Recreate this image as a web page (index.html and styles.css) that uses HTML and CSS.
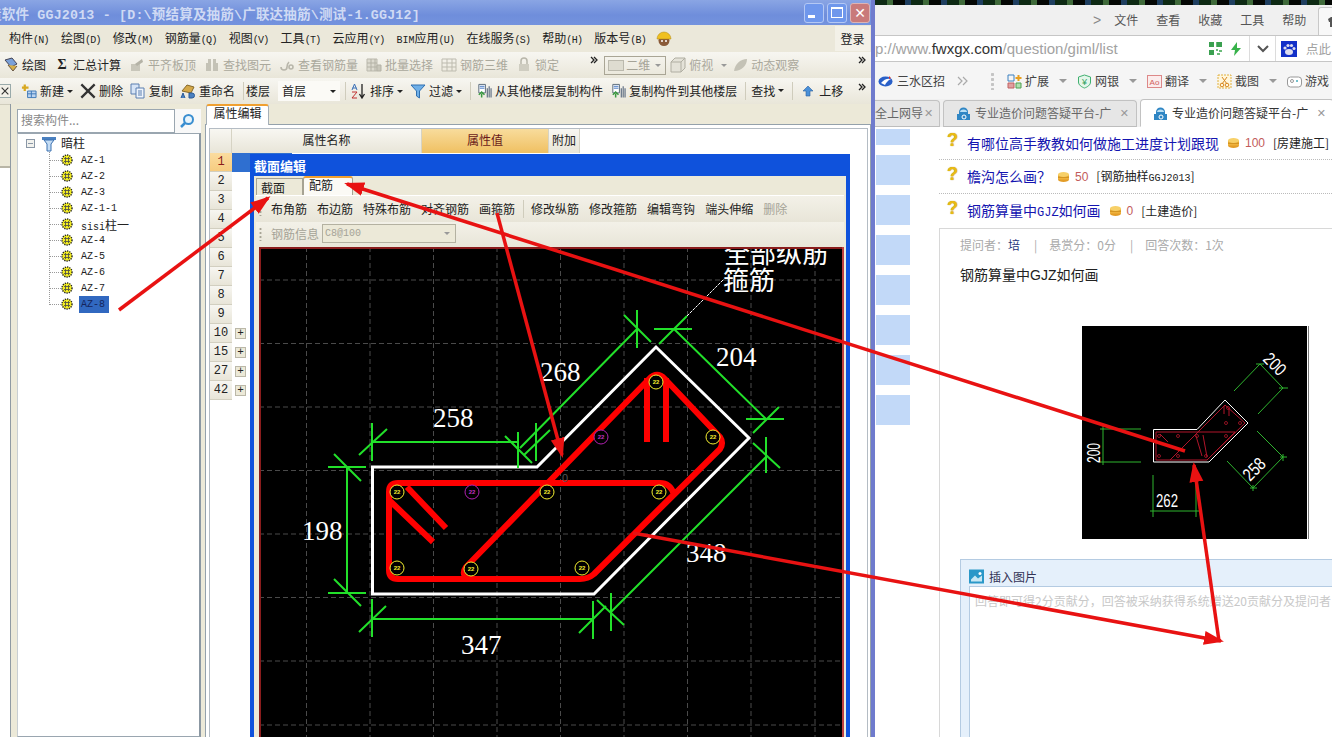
FILE: index.html
```html
<!DOCTYPE html>
<html lang="zh-CN">
<head>
<meta charset="utf-8">
<title>GGJ2013</title>
<link rel="stylesheet" href="styles.css">
</head>
<body>
<svg class="defs" aria-hidden="true">
  <symbol id="gear" viewBox="0 0 12 12"><circle cx="6" cy="6" r="5" fill="#f4ee20" stroke="#222" stroke-width="1.4" stroke-dasharray="1.3 1"/><path d="M3 4.5h6M3 7.5h6M4.5 3v6M7.5 3v6" stroke="#554" stroke-width=".9"/></symbol>
  <symbol id="dbl" viewBox="0 0 8 8"><path d="M1 1l3 3-3 3M4 1l3 3-3 3" fill="none" stroke="#222" stroke-width="1.3"/></symbol>
  <symbol id="draw" viewBox="0 0 16 16"><path d="M2 3l6 7 6-3-5-6z" fill="#7aa0d8" stroke="#445"/><path d="M5 8l5 6 4-5" fill="#d8b048" stroke="#654"/></symbol>
  <symbol id="gray" viewBox="0 0 16 16"><path d="M2 7h9v7H2z" fill="#c8c6ba"/><path d="M6 7l7-5 1 3-6 4z" fill="#b4b2a6"/></symbol>
  <symbol id="bino" viewBox="0 0 16 16"><path d="M2 6h5v8H2zM9 6h5v8H9zM4 2h3v4H4zM9 2h3v4H9z" fill="#c4c2b6"/></symbol>
  <symbol id="look" viewBox="0 0 16 16"><path d="M2 10a3 3 0 006 0c0-3 1-4 2-5M10 10a2 2 0 104 0 2 2 0 00-4 0" fill="none" stroke="#b8b6aa" stroke-width="1.6"/></symbol>
  <symbol id="batch" viewBox="0 0 16 16"><path d="M1 2h10v12H1z" fill="#dcdacf" stroke="#bbb9ad"/><path d="M1 6h10M1 10h10M5 2v12M9 2v12M11 8h4v6h-4z" fill="#c8c6ba" stroke="#b4b2a6"/></symbol>
  <symbol id="bars" viewBox="0 0 16 16"><path d="M1 2h14v12H1zM1 6h14M1 10h14M6 2v12M11 2v12" fill="none" stroke="#bdbbaf"/></symbol>
  <symbol id="lock" viewBox="0 0 16 16"><path d="M5 7V4a3 3 0 016 0v3" fill="none" stroke="#b8b6aa" stroke-width="1.5"/><path d="M3 7h10v7H3z" fill="#cfcdc1"/></symbol>
  <symbol id="cube" viewBox="0 0 16 16"><path d="M1 5l4-4h10v10l-4 4H1zM1 5h10v10M11 5l4-4" fill="#e4e2d8" stroke="#b0aea2"/></symbol>
  <symbol id="orbit" viewBox="0 0 16 16"><path d="M2 14C3 7 8 2 15 2c0 6-5 12-13 12z" fill="#c4c2b6"/></symbol>
  <symbol id="new" viewBox="0 0 17 16"><path d="M7 8h9v7H7z" fill="#bcd4f0" stroke="#3c78b8"/><path d="M7 11h9M11 8v7" stroke="#3c78b8"/><path d="M4 1v7M1 4.500h7" stroke="#d8a820" stroke-width="2.400"/></symbol>
  <symbol id="x" viewBox="0 0 12 12"><path d="M1 1l10 10M11 1L1 11" stroke="#333" stroke-width="1.700"/></symbol>
  <symbol id="copy" viewBox="0 0 16 16"><path d="M1 1h8v10H1z" fill="#d6e4f6" stroke="#5a7fb0"/><path d="M6 5h8v10H6z" fill="#eef4fc" stroke="#5a7fb0"/><path d="M8 8h4M8 10h4M8 12h4" stroke="#5a7fb0"/></symbol>
  <symbol id="rename" viewBox="0 0 16 16"><path d="M2 8l5-6 7 2-3 6z" fill="#d4a848" stroke="#85682a"/><path d="M1 15l2-5 2 5M9 15V10h3a2 2 0 010 5z" fill="#4a80c0" stroke="#2a5a98"/></symbol>
  <symbol id="sort" viewBox="0 0 16 16"><path d="M1 7l2.500-6L6 7M1.500 5h4" fill="none" stroke="#3a70b8"/><path d="M1 9h5l-5 6h5" fill="none" stroke="#c03030"/><path d="M11 1v13M8.500 11l2.500 4 2.500-4" fill="none" stroke="#222" stroke-width="1.300"/></symbol>
  <symbol id="filter" viewBox="0 0 16 16"><path d="M1 2h14L9.500 8v7L6.500 13V8z" fill="#70b0e8" stroke="#3070b0"/></symbol>
  <symbol id="fromlv" viewBox="0 0 17 16"><path d="M3 1h7v9H3z" fill="#fff" stroke="#567"/><path d="M4 3h5M4 5h5" stroke="#3a70c0"/><path d="M6 15v-4M3 12l3-3 3 3" fill="none" stroke="#3a9a40" stroke-width="1.600"/><path d="M12 5v10M14 3v12M16 5v10" stroke="#5a6a80" stroke-width="1.200"/></symbol>
  <symbol id="up" viewBox="0 0 16 16"><path d="M8 3l5 5h-3v5H6V8H3z" fill="#4a90d8" stroke="#2a60a0" stroke-width=".6"/></symbol>
  <symbol id="coin" viewBox="0 0 11 10"><ellipse cx="5.500" cy="7.500" rx="5.500" ry="2.500" fill="#e39d28"/><rect y="2.500" width="11" height="5" fill="#efb23c"/><path d="M0 5.200h11" stroke="#c98818"/><ellipse cx="5.500" cy="2.500" rx="5.500" ry="2.500" fill="#f7d068"/></symbol>
  <symbol id="tabicon" viewBox="0 0 15 15"><path d="M3 6a4.500 4.500 0 019 0v2H3z" fill="#2f86c4"/><path d="M1 8h13v6H1z" fill="#2f86c4" rx="2"/><path d="M4 6a3.500 2.500 0 017 0" fill="#b8def4"/><circle cx="8" cy="11" r="2" fill="none" stroke="#fff"/></symbol>
</svg>

<main class="desktop">

  <section class="browser">
    <div class="b-wall"></div>
    <div class="b-menu">
      <span class="b-chev">&gt;</span><span>文件</span><span>查看</span><span>收藏</span><span>工具</span><span>帮助</span>
      <div class="b-skin"><svg class="ic12" viewBox="0 0 12 12"><path d="M1 3l3-2h4l3 2-1 3H9v5H3V6H2z" fill="#555"/></svg></div>
    </div>
    <div class="b-addr">
      <div class="b-url">p://www.<b>fwxgx.com</b>/question/giml/list</div>
      <svg class="ic13" viewBox="0 0 13 13"><path d="M0 0h5v5H0zM8 0h5v5H8zM0 8h5v5H0zM2 2h1v1H2zM10 2h1v1h-1z" fill="#3aa050"/><path d="M7 7h2v2H7zM10 8h3v2h-3zM8 11h3v2H8zM7 0h1v5H7z" fill="#6bbb7a"/></svg>
      <svg class="ic-bolt" viewBox="0 0 12 14"><path d="M7 0L1 8h4l-1 6 7-8H7z" fill="#37b24a"/></svg>
      <i class="b-sep"></i>
      <svg class="ic-chev" viewBox="0 0 12 8"><path d="M1 1l5 5 5-5" fill="none" stroke="#555" stroke-width="2"/></svg>
      <i class="b-sep"></i>
      <svg class="ic-paw" viewBox="0 0 16 16"><rect width="16" height="16" fill="#1230c8"/><ellipse cx="8" cy="11" rx="4" ry="3" fill="#dde"/><circle cx="4" cy="7" r="1.600" fill="#dde"/><circle cx="7" cy="4.500" r="1.600" fill="#dde"/><circle cx="10.500" cy="4.500" r="1.600" fill="#dde"/><circle cx="13" cy="7.500" r="1.500" fill="#dde"/></svg>
      <span class="b-search">点此</span>
    </div>
    <div class="b-fav">
      <span class="fav"><svg class="ic15" viewBox="0 0 15 15"><ellipse cx="7.500" cy="7.500" rx="7" ry="5" fill="#2a60c8"/><path d="M3 9c3-4 7-5 10-4-3 1-5 4-6 6" fill="#fff"/><path d="M11 2l2 2-2 1z" fill="#d83030"/></svg>三水区招</span>
      <svg class="ic-dbl" viewBox="0 0 12 10"><path d="M1 1l4 4-4 4M6 1l4 4-4 4" fill="none" stroke="#aaa" stroke-width="1.200"/></svg>
      <i class="b-grip"></i>
      <span class="fav"><svg class="ic15" viewBox="0 0 15 15"><path d="M1 1h6v6H1z" fill="none" stroke="#3a80c0"/><path d="M1 9h6v5H1z" fill="#e0a0a0" stroke="#c06060"/><path d="M9 9h5v5H9z" fill="#b0e0b0" stroke="#50a050"/><path d="M11.500 1v6M8.500 4h6" stroke="#e8a020" stroke-width="2"/></svg>扩展<i class="tri"></i></span>
      <span class="fav"><svg class="ic15" viewBox="0 0 15 15"><path d="M7.500 1l6 2v5c0 3-3 5-6 6-3-1-6-3-6-6V3z" fill="#e4f6ea" stroke="#40b070"/><text class="yen" x="7.500" y="11">¥</text></svg>网银<i class="tri"></i></span>
      <span class="fav"><svg class="ic15" viewBox="0 0 15 15"><rect x=".5" y="1.500" width="14" height="12" fill="#fbecec" stroke="#d88"/><text class="ao" x="7.500" y="10.500">Ao</text></svg>翻译<i class="tri"></i></span>
      <span class="fav"><svg class="ic15" viewBox="0 0 15 15"><rect x="1" y="1" width="13" height="13" fill="#fff6dc" stroke="#e0b040" stroke-dasharray="2 1"/><path d="M5 3l5 7M10 3l-5 7" stroke="#d88820"/><circle cx="5" cy="11" r="1.800" fill="none" stroke="#d88820"/><circle cx="10" cy="11" r="1.800" fill="none" stroke="#d88820"/></svg>截图<i class="tri"></i></span>
      <span class="fav"><svg class="ic15" viewBox="0 0 15 15"><rect x=".5" y="3" width="14" height="10" rx="3" fill="#fff" stroke="#999"/><circle cx="5" cy="7" r="1.500" fill="none" stroke="#999"/><circle cx="10" cy="7" r="1" fill="#4ab"/></svg>游戏</span>
    </div>
    <div class="b-tabs">
      <div class="tab tab-a"><span class="tab-t">全上网导</span><span class="tab-x">✕</span></div>
      <div class="tab tab-b"><svg class="ic15" aria-hidden="true"><use href="#tabicon"/></svg><span class="tab-t">专业造价问题答疑平台-广</span><span class="tab-x">✕</span></div>
      <div class="tab tab-c"><svg class="ic15" aria-hidden="true"><use href="#tabicon"/></svg><span class="tab-t">专业造价问题答疑平台-广</span><span class="tab-x">✕</span></div>
    </div>
    <div class="b-page">
      <div class="stripes"><i class="st-first"></i><i></i><i></i><i></i><i></i><i></i><i></i><i></i></div>
      <div class="qa">
        <div class="q-row q-dot"><span class="qm">?</span><a class="q-t">有哪位高手教教如何做施工进度计划跟现</a><svg class="coin"><use href="#coin"/></svg><span class="pts">100</span><span class="cat">[房建施工]</span></div>
        <div class="q-row q-dot"><span class="qm">?</span><a class="q-t q-t2">檐沟怎么画？</a><svg class="coin"><use href="#coin"/></svg><span class="pts">50</span><span class="cat">[钢筋抽样<span class="lat">GGJ2013</span>]</span></div>
        <div class="q-row"><span class="qm">?</span><a class="q-t">钢筋算量中<span class="lat-b">GJZ</span>如何画</a><svg class="coin"><use href="#coin"/></svg><span class="pts">0</span><span class="cat">[土建造价]</span></div>
        <div class="detail">
          <div class="meta">提问者：<b>培</b><i>|</i>悬赏分：0分<i>|</i>回答次数：1次</div>
          <div class="q-body">钢筋算量中GJZ如何画</div>
          <svg class="q-img" viewBox="1082 326 225 213">
            <rect x="1082" y="326" width="225" height="213" fill="#000"/>
            <path class="i-white" d="M1153.500 429.500H1197L1225 400 1248 423 1209 462H1153.500Z"/>
            <path class="i-red" d="M1156 432H1235L1207 460H1156ZM1170 460L1225 405 1245 423 1207 460M1160 434l8 8M1224 406v8M1229 408v8M1203 435l4 22M1196 436l6 20"/>
            <g class="i-bars"><circle cx="1159" cy="456" r="1.500"/><circle cx="1159" cy="436" r="1.500"/><circle cx="1178" cy="436" r="1.500"/><circle cx="1197" cy="436" r="1.500"/><circle cx="1226" cy="423" r="1.500"/><circle cx="1228" cy="408" r="1.500"/><circle cx="1240" cy="423" r="1.500"/><circle cx="1226" cy="436" r="1.500"/><circle cx="1178" cy="456" r="1.500"/><circle cx="1206" cy="456" r="1.500"/></g>
            <path class="i-green" d="M1153 475V517M1196 470V517M1150 511H1199M1100 429H1141M1100 462H1141M1103 426V465M1260 364L1234 391M1260 364L1283 388M1283 388L1258 414M1257 431L1283 457M1283 457L1253 488M1227 461L1253 488M1256 364H1264M1279 388H1288M1280 457H1287M1283 454V461M1250 488H1257M1253 485V491"/>
            <text class="i-txt" x="1156" y="507" textLength="22" lengthAdjust="spacingAndGlyphs">262</text>
            <text class="i-txt" transform="rotate(-90 1100 463)" x="1100" y="463" textLength="20" lengthAdjust="spacingAndGlyphs">200</text>
            <text class="i-txt" transform="rotate(45 1262 360)" x="1262" y="360" textLength="24" lengthAdjust="spacingAndGlyphs">200</text>
            <text class="i-txt" transform="rotate(-45 1250 482)" x="1250" y="482" textLength="24" lengthAdjust="spacingAndGlyphs">258</text>
          </svg>
          <div class="editor">
            <div class="ed-head"><svg class="ic15" viewBox="0 0 15 14"><rect width="15" height="14" fill="#2a98c8"/><path d="M2 10l4-4 3 3 4-3v6H2z" fill="#c8e8f4"/><circle cx="11" cy="4" r="1.500" fill="#fff"/></svg>插入图片</div>
            <div class="ed-box">回答即可得2分贡献分，回答被采纳获得系统赠送20贡献分及提问者</div>
          </div>
        </div>
      </div>
    </div>
  </section>

  <section class="app">
    <header class="titlebar">
      <div class="title">造软件<span class="tlat"> GGJ2013 - [D:\</span>预结算及抽筋<span class="tlat">\</span>广联达抽筋<span class="tlat">\</span>测试<span class="tlat">-1.GGJ12]</span></div>
      <div class="winbtns">
        <span class="wb"><i class="wb-min"></i></span>
        <span class="wb"><i class="wb-max"></i></span>
        <span class="wb wb-close">✕</span>
      </div>
    </header>
    <nav class="menubar">
      <span>构件<span class="key">(N)</span></span><span>绘图<span class="key">(D)</span></span><span>修改<span class="key">(M)</span></span><span>钢筋量<span class="key">(Q)</span></span><span>视图<span class="key">(V)</span></span><span>工具<span class="key">(T)</span></span><span>云应用<span class="key">(Y)</span></span><span><span class="key bim">BIM</span>应用<span class="key">(U)</span></span><span>在线服务<span class="key">(S)</span></span><span>帮助<span class="key">(H)</span></span><span>版本号<span class="key">(B)</span></span>
      <svg class="face" viewBox="0 0 16 16"><circle cx="8" cy="9.500" r="5.500" fill="#8a5a38"/><path d="M1 8a7 7 0 0114 0z" fill="#f0c020" stroke="#b08810" stroke-width=".5"/><circle cx="6" cy="10" r="1" fill="#fff"/><circle cx="10" cy="10" r="1" fill="#fff"/></svg>
      <span class="login">登录</span>
    </nav>
    <div class="toolbar t1">
      <span class="ti"><svg class="ic16"><use href="#draw"/></svg>绘图</span>
      <span class="ti"><b class="sigma">Σ</b>汇总计算</span>
      <span class="ti off"><svg class="ic16"><use href="#gray"/></svg>平齐板顶</span>
      <span class="ti off"><svg class="ic16"><use href="#bino"/></svg>查找图元</span>
      <span class="ti off"><svg class="ic16"><use href="#look"/></svg>查看钢筋量</span>
      <span class="ti off"><svg class="ic16"><use href="#batch"/></svg>批量选择</span>
      <span class="ti off"><svg class="ic16"><use href="#bars"/></svg>钢筋三维</span>
      <span class="ti off"><svg class="ic16"><use href="#lock"/></svg>锁定</span>
      <svg class="more more1"><use href="#dbl"/></svg>
      <span class="combo2"><i class="c2-ic"></i>二维<i class="caret gray"></i></span>
      <span class="ti off ti-v"><svg class="ic16"><use href="#cube"/></svg>俯视<i class="caret gray"></i></span>
      <span class="ti off ti-o"><svg class="ic16"><use href="#orbit"/></svg>动态观察</span>
      <svg class="more more2"><use href="#dbl"/></svg>
    </div>
    <div class="toolbar t2">
      <span class="closebox"><svg class="ic8"><use href="#x"/></svg></span>
      <span class="ti ti-first"><svg class="ic16"><use href="#new"/></svg>新建<i class="caret"></i></span>
      <span class="ti"><svg class="ic16"><use href="#x"/></svg>删除</span>
      <span class="ti"><svg class="ic16"><use href="#copy"/></svg>复制</span>
      <span class="ti"><svg class="ic16"><use href="#rename"/></svg>重命名</span>
      <i class="sep"></i><span class="floor">楼层</span>
      <span class="combo">首层<i class="caret"></i></span>
      <i class="sep"></i>
      <span class="ti ti-s"><svg class="ic16"><use href="#sort"/></svg>排序<i class="caret"></i></span>
      <span class="ti"><svg class="ic16"><use href="#filter"/></svg>过滤<i class="caret"></i></span>
      <i class="sep"></i>
      <span class="ti ti-s"><svg class="ic16"><use href="#fromlv"/></svg>从其他楼层复制构件</span>
      <span class="ti"><svg class="ic16"><use href="#fromlv"/></svg>复制构件到其他楼层</span>
      <i class="sep"></i>
      <span class="ti ti-s">查找<i class="caret"></i></span>
      <i class="sep"></i>
      <span class="ti ti-s ti-up"><svg class="ic16"><use href="#up"/></svg>上移</span>
      <svg class="more more3"><use href="#dbl"/></svg>
    </div>
    <div class="work">
      <aside class="stub"><i class="stub-a"></i><i class="stub-b"></i></aside>
      <aside class="tree-pane">
        <div class="searchrow">
          <div class="search">搜索构件...</div>
          <svg class="s-ic" viewBox="0 0 16 16"><circle cx="9.500" cy="6.500" r="4.500" fill="#e8f4fc" stroke="#3a8ed0" stroke-width="2"/><path d="M6 10l-4 4" stroke="#3a8ed0" stroke-width="2.500"/></svg>
        </div>
        <div class="tree">
          <div class="t-root">
            <span class="minus"></span>
            <svg class="fun" viewBox="0 0 14 16"><path d="M0 1h14v3H0z" fill="#4a80c0"/><path d="M2 4h10L9 8v7H5V8z" fill="#c4dcf4" stroke="#3a70b0"/></svg>
            暗柱
          </div>
          <ul class="t-list">
            <li><svg class="gear"><use href="#gear"/></svg><span>AZ-1</span></li>
            <li><svg class="gear"><use href="#gear"/></svg><span>AZ-2</span></li>
            <li><svg class="gear"><use href="#gear"/></svg><span>AZ-3</span></li>
            <li><svg class="gear"><use href="#gear"/></svg><span>AZ-1-1</span></li>
            <li><svg class="gear"><use href="#gear"/></svg><span>sisi<b>柱一</b></span></li>
            <li><svg class="gear"><use href="#gear"/></svg><span>AZ-4</span></li>
            <li><svg class="gear"><use href="#gear"/></svg><span>AZ-5</span></li>
            <li><svg class="gear"><use href="#gear"/></svg><span>AZ-6</span></li>
            <li><svg class="gear"><use href="#gear"/></svg><span>AZ-7</span></li>
            <li><svg class="gear"><use href="#gear"/></svg><span class="sel">AZ-8</span></li>
          </ul>
        </div>
      </aside>
      <section class="props">
        <div class="p-tabs"><span class="p-tab">属性编辑</span></div>
        <div class="p-body">
          <div class="grid">
            <div class="g-head">
              <span class="gh gh-n"></span><span class="gh gh-a">属性名称</span><span class="gh gh-b">属性值</span><span class="gh gh-c">附加</span>
            </div>
            <div class="g-row cur"><span class="rn">1</span></div>
            <div class="g-row"><span class="rn">2</span></div>
            <div class="g-row"><span class="rn">3</span></div>
            <div class="g-row"><span class="rn">4</span></div>
            <div class="g-row"><span class="rn">5</span></div>
            <div class="g-row"><span class="rn">6</span></div>
            <div class="g-row"><span class="rn">7</span></div>
            <div class="g-row"><span class="rn">8</span></div>
            <div class="g-row"><span class="rn">9</span></div>
            <div class="g-row"><span class="rn">10</span><span class="plus">+</span></div>
            <div class="g-row"><span class="rn">15</span><span class="plus">+</span></div>
            <div class="g-row"><span class="rn">27</span><span class="plus">+</span></div>
            <div class="g-row"><span class="rn">42</span><span class="plus">+</span></div>
          </div>
        </div>
      </section>
    </div>

    <div class="dialog">
      <div class="d-title">截面编辑</div>
      <div class="d-body">
        <div class="d-tabs"><span class="d-tab">截面</span><span class="d-tab on">配筋</span></div>
        <div class="d-bar">
          <i class="grip"></i><span>布角筋</span><span>布边筋</span><span>特殊布筋</span><span>对齐钢筋</span><span>画箍筋</span><i class="sep"></i><span>修改纵筋</span><span>修改箍筋</span><span>编辑弯钩</span><span>端头伸缩</span><span class="dis">删除</span>
        </div>
        <div class="d-bar d-bar2">
          <i class="grip"></i><span class="dis">钢筋信息</span><span class="d-sel">C8@100<i class="caret gray"></i></span>
        </div>
        <svg class="canvas" viewBox="261 249 581 488">
          <path class="grid-l" d="M306.500 247V737M370 247V737M433.500 247V737M497 247V737M560.500 247V737M624 247V737M687.500 247V737M751 247V737M815 247V737M259 280H842M259 343.500H842M259 407H842M259 470.500H842M259 534H842M259 597.500H842M259 661H842M259 725H842"/>
          <path class="outline" d="M372.500 467H537L656 347 749 438 594 594H372.500Z"/>
          <path class="leader" d="M687 316L724 279"/>
          <path class="gr" d="M372 442H518M372 423V461M359 455L387 429M518 432V468M505 436L532 463M520 448L637 329M536 423V461M524 455L550 430M637 310V348M624 315L651 342M674 329L766 419M654 329H692M659 344L687 316M746 419H784M753 433L779 407M347 467V593M328 467H366M334 454L361 481M328 593H366M334 579L361 606M372 619H593M372 599V637M359 632L386 606M593 601V639M579 633L606 606M611 612L766 457M611 593V631M597 600L624 625M766 437V473M753 443L780 468"/>
          <path class="rebar" d="M398 483H660Q670 483 674 494L594 574Q588 579 580 579H398Q389 579 389 570V492Q389 483 398 483ZM594 574L720 449Q724 443 720 437L665 379Q657 371 649 379L466 567Q461 574 468 579M407 487L446 528M389 500L433 542M647 378V442M666 378V442"/>
          <g class="bar-y">
            <circle cx="397" cy="492" r="7"/><circle cx="397" cy="568" r="7"/><circle cx="471" cy="569" r="7"/><circle cx="582" cy="568" r="7"/><circle cx="547" cy="492" r="7"/><circle cx="659" cy="492" r="7"/><circle cx="656" cy="382" r="7"/><circle cx="713" cy="437" r="7"/>
          </g>
          <g class="bar-m"><circle cx="472" cy="492" r="7"/><circle cx="601" cy="437" r="7"/></g>
          <g class="bar-ty">
            <text x="397" y="494">22</text><text x="397" y="570">22</text><text x="471" y="571">22</text><text x="582" y="570">22</text><text x="547" y="494">22</text><text x="659" y="494">22</text><text x="656" y="384">22</text><text x="713" y="439">22</text>
          </g>
          <g class="bar-tm"><text x="472" y="494">22</text><text x="601" y="439">22</text></g>
          <text class="dim" x="433" y="427">258</text>
          <text class="dim" x="540" y="381">268</text>
          <text class="dim" x="716" y="366">204</text>
          <text class="dim" x="302" y="540">198</text>
          <text class="dim" x="461" y="654">347</text>
          <text class="dim" x="686" y="562">348</text>
          <text class="lbl" x="724" y="263">全部纵筋</text>
          <text class="lbl" x="723" y="290">箍筋</text>
          <text class="zero" x="562" y="482">0</text>
        </svg>
      </div>
    </div>
  </section>

  <svg class="overlay" viewBox="0 0 1332 737" aria-hidden="true">
    <defs>
      <marker id="head" markerUnits="userSpaceOnUse" markerWidth="20" markerHeight="16" refX="17" refY="8" orient="auto"><path d="M0 1L20 8 0 15Z" fill="#e81212"/></marker>
    </defs>
    <path class="arrow" marker-end="url(#head)" d="M119 310L268 198"/>
    <path class="arrow" marker-end="url(#head)" d="M1185 451L347 184"/>
    <path class="arrow" marker-end="url(#head)" d="M497 213L562 455"/>
    <path class="arrow" marker-end="url(#head)" d="M633 533L1221 641"/>
    <path class="arrow" marker-end="url(#head)" d="M1219 641L1194 465"/>
  </svg>
</main>
</body>
</html>
```
FILE: styles.css
```css
* { box-sizing: border-box; }
html, body { margin: 0; height: 100%; overflow: hidden; background: #fff; }
body { font: 12px/1.2 "Noto Sans CJK SC", "Liberation Sans", sans-serif; color: #222; }
i { font-style: normal; display: block; }
.defs { display: none; }
.desktop { position: relative; width: 1332px; height: 737px; overflow: hidden; }

/* ---------- browser window ---------- */
.browser { position: absolute; left: 875px; top: 0; width: 457px; height: 737px; display: flex; flex-direction: column; background: #fff; }
.b-wall { height: 5px; flex: none; background: repeating-linear-gradient(90deg, #0e2a14 0 12px, #3f6a3a 12px 18px, #050805 18px 30px, #1f3f60 30px 36px); }
.b-menu { height: 30px; flex: none; background: #f0f0f0; display: flex; align-items: center; gap: 18px; padding-left: 218px; color: #555; white-space: nowrap; }
.b-menu span { flex: none; }
.b-chev { margin-right: -5px; color: #888; font: 14px "Liberation Sans", sans-serif; }
.b-skin { margin-left: -6px; width: 30px; height: 28px; flex: none; align-self: flex-end; border: 1px solid #c8c8c8; border-right: 0; border-bottom: 0; border-radius: 3px 0 0 0; background: #f8f8f8; display: flex; align-items: center; padding-left: 8px; }
.ic12 { width: 12px; height: 12px; }
.b-addr { height: 27px; flex: none; background: #fff; border-top: 1px solid #c6c6c6; border-bottom: 1px solid #c6c6c6; display: flex; align-items: center; overflow: hidden; }
.b-url { width: 334px; flex: none; font: 15px "Liberation Sans", sans-serif; color: #a2a2a2; white-space: nowrap; }
.b-url b { font-weight: 400; color: #333; }
.ic13 { width: 13px; height: 13px; flex: none; }
.ic-bolt { width: 12px; height: 14px; flex: none; margin-left: 8px; }
.b-sep { width: 1px; height: 26px; flex: none; background: #dcdcdc; margin: 0 7px; }
.ic-chev { width: 12px; height: 8px; flex: none; margin: 0 -1px 0 0; }
.ic-paw { width: 16px; height: 16px; flex: none; margin-left: -2px; }
.b-search { margin-left: 9px; font-size: 12.500px; color: #a0a0a0; white-space: nowrap; }
.b-fav { height: 37px; flex: none; background: #f5f5f5; display: flex; align-items: center; padding: 1px 0 0 3px; color: #444; font-size: 12px; white-space: nowrap; }
.fav { display: flex; align-items: center; gap: 3px; margin-right: 10px; flex: none; }
.fav:first-child { gap: 4px; margin-right: 12px; }
.ic15 { width: 15px; height: 15px; flex: none; }
.ic-dbl { width: 12px; height: 10px; flex: none; }
.b-grip { width: 3px; height: 18px; margin: 0 13px 0 22px; background: radial-gradient(circle, #c4c4c4 1.400px, transparent 1.500px) 0 0 / 3px 5px; flex: none; }
.tri { width: 0; height: 0; margin-left: 7px; border: 4px solid transparent; border-top: 4px solid #999; border-bottom: 0; }
.yen { font: 9px "Liberation Sans", sans-serif; fill: #30a060; text-anchor: middle; }
.ao { font: 8px "Liberation Sans", sans-serif; fill: #d06060; text-anchor: middle; }
.b-tabs { height: 28px; flex: none; background: #f0f0f0; display: flex; gap: 3px; align-items: flex-end; }
.tab { height: 27px; background: #e6e6e6; border: 1px solid #c2c2c2; border-bottom: 1px solid #bdbdbd; border-radius: 4px 4px 0 0; display: flex; align-items: center; gap: 4px; padding: 0 3px 0 12px; color: #666; font-size: 12px; overflow: hidden; flex: none; }
.tab-t { flex: 1; overflow: hidden; white-space: nowrap; min-width: 0; }
.tab-x { flex: none; color: #999; font: 11px "DejaVu Sans", sans-serif; margin-right: 4px; }
.tab-a { width: 65px; padding: 0 1px 0 0; gap: 1px; border-left: 0; border-radius: 0 4px 0 0; }
.tab-a .tab-t { flex: none; }
.tab-a .tab-x { margin-right: 0; }
.tab-b { width: 194px; }
.tab-c { flex: 1; background: #fff; border-bottom-color: #fff; color: #333; margin-right: -2px; height: 28px; }
.b-page { flex: 1; display: flex; min-height: 0; }
.stripes { width: 64px; flex: none; padding: 2px 0 0 1px; display: flex; flex-direction: column; gap: 10px; }
.stripes i { width: 34px; height: 30px; background: #c2d9f8; }
.stripes .st-first { height: 16px; }
.qa { flex: 1; min-width: 0; display: flex; flex-direction: column; }
.q-row { height: 34px; flex: none; display: flex; align-items: center; padding-left: 8px; white-space: nowrap; }
.q-row.q-dot { border-bottom: 1px dotted #bbb; }
.q-row:first-child { height: 33px; }
.qm { width: 20px; flex: none; font: bold 18px/1 "Liberation Sans", sans-serif; color: #e9bb14; text-shadow: 0 0 1px #a87a00; position: relative; top: -3px; }
.q-t { color: #1414b0; font-size: 14px; margin-right: 9px; }
.q-t2 { margin-right: 7px; }
.lat-b { font: 12px "Liberation Mono", monospace; }
.lat { font: 10px "Liberation Mono", monospace; }
.coin { width: 11px; height: 10px; flex: none; }
.pts { color: #c25b5b; font: 12px "Liberation Sans", sans-serif; margin: 0 8px 0 6px; }
.cat { font-size: 12px; color: #222; }
.detail { flex: 1; border-top: 1px solid #d8d8d8; border-left: 1px solid #d8d8d8; margin-top: 0; padding: 8px 0 0 20px; position: relative; min-height: 0; }
.meta { color: #aaa; font-size: 12px; height: 16px; line-height: 16px; display: flex; white-space: nowrap; }
.meta b { font-weight: 400; color: #23337a; }
.meta i { margin: 0 12px 0 14px; }
.q-body { margin-top: 13px; font: 14px/18px "Liberation Sans", "Noto Sans CJK SC", sans-serif; color: #222; }
.q-img { display: block; width: 225px; height: 213px; margin: 42px 0 0 122px; overflow: hidden; box-shadow: 1px 0 0 #fff, 2px 0 0 #777; }
.i-white { fill: none; stroke: #fff; stroke-width: 1; }
.i-red { fill: none; stroke: #b0152a; stroke-width: 1; }
.i-bars circle { fill: none; stroke: #b0152a; stroke-width: .8; }
.i-green { fill: none; stroke: #2fb52f; stroke-width: 1; }
.i-txt { font: 18px "Liberation Sans", sans-serif; fill: #fff; text-anchor: start; }
.editor { margin-top: 20px; height: 200px; background: #e5f0fb; border: 1px solid #b4cbe2; border-right: 0; padding-left: 8px; }
.ed-head { height: 26px; display: flex; align-items: flex-end; padding-bottom: 2px; gap: 5px; color: #335; }
.ed-box { height: 200px; background: #fff; border: 1px solid #b4cbe2; border-right: 0; padding: 7px 0 0 5px; color: #c8c8c8; white-space: nowrap; overflow: hidden; }

/* ---------- application window ---------- */
.app { position: absolute; left: 0; top: 0; width: 875px; height: 737px; display: flex; flex-direction: column; background: #ece9d8; border-right: 4px solid #6f7bcd; overflow: hidden; }
.titlebar { height: 25px; flex: none; background: linear-gradient(#8aa5e4, #6f8edb 60%, #7493de); display: flex; align-items: center; justify-content: space-between; }
.title { margin-left: -12px; font: bold 13.500px "Noto Sans CJK SC", sans-serif; color: #cfdaf4; white-space: pre; letter-spacing: .2px; }
.tlat { font: 13.300px "Liberation Mono", monospace; font-weight: 700; }
.winbtns { display: flex; gap: 3px; margin-right: 1px; }
.wb { width: 20px; height: 20px; border-radius: 3px; background: #6f97ec; border: 1px solid #b4c8f4; display: flex; align-items: center; justify-content: center; color: #fff; font: bold 14px "DejaVu Sans", sans-serif; }
.wb-close { background: #c97a7a; border-color: #dcb4b4; }
.wb-min { width: 7px; height: 3px; background: #fff; margin: 8px 5px 0 0; }
.wb-max { width: 12px; height: 11px; border: 1px solid #fff; border-top-width: 2px; }
.menubar { height: 27px; flex: none; background: #ebe8da; display: flex; align-items: center; gap: 12px; padding-left: 9px; white-space: nowrap; }
.key { font: 10px "Liberation Mono", monospace; letter-spacing: -.7px; }
.key.bim { letter-spacing: 0; }
.face { width: 16px; height: 16px; margin-left: -2px; }
.login { margin-left: auto; width: 35px; height: 25px; line-height: 25px; text-align: center; background: #f3f1e8; margin-right: 1px; }
.toolbar { height: 26px; flex: none; background: linear-gradient(#f7f6f1, #e9e6d9); display: flex; align-items: center; white-space: nowrap; position: relative; }
.ti { display: flex; align-items: center; gap: 3px; margin-left: 8px; }
.off { color: #aaa89c; }
.ic16 { width: 16px; height: 16px; flex: none; }
.ic8 { width: 8px; height: 8px; }
.sigma { width: 16px; text-align: center; font: bold 14px "Liberation Serif", serif; }
.t1 { padding-left: 3px; }
.t1 .ti:first-child { margin-left: 0; }
.more { width: 8px; height: 8px; flex: none; }
.more1 { margin: -10px 0 0 31px; }
.combo2 { width: 62px; height: 19px; margin-left: 6px; border: 1px solid #a9a595; color: #a5a397; display: flex; align-items: center; gap: 2px; padding-left: 3px; }
.c2-ic { width: 16px; height: 11px; background: #dedcd0; border: 1px solid #bbb9ad; }
.ti-v { margin-left: 4px; }
.ti-v .caret { margin-left: 5px; }
.ti-o { margin-left: 5px; }
.more2 { margin: -10px 0 0 auto; position: relative; right: 5px; }
.caret { width: 0; height: 0; margin-left: auto; border: 3px solid transparent; border-top: 3px solid #222; border-bottom: 0; }
.caret.gray { border-top-color: #999; }
.combo2 .caret { margin-right: 4px; }
.t2 { padding-left: 0; }
.closebox { width: 11px; height: 14px; border: 1px solid #9aa; border-left: 0; display: flex; align-items: center; justify-content: center; background: #f2f0e8; flex: none; }
.t2 .ti .caret { margin-left: 0; }
.t2 .ti { margin-left: 7px; }
.t2 .ti-first { margin-left: 10px; }
.t2 .ti-s { margin-left: 5px; }
.t2 .ti-up { margin-left: 7px; }
.sep { width: 1px; height: 18px; background: #cfccbc; flex: none; margin-left: 8px; }
.floor { margin-left: 2px; }
.combo { width: 62px; height: 20px; margin-left: 8px; background: #fbfaf6; display: flex; align-items: center; padding: 0 4px 0 4px; margin-right: -3px; }
.more3 { position: absolute; right: 5px; top: 5px; }
.work { flex: 1; min-height: 0; display: flex; }
.stub { width: 11px; flex: none; border-right: 1px solid #8f9aa3; display: flex; flex-direction: column; }
.stub-a { height: 63px; border-top: 1px solid #d0cdbd; border-bottom: 1px solid #b8b5a6; background: #ece9d8; flex: none; }
.stub-b { flex: 1; background: #fff; border-top: 1px solid #b8b5a6; }
.tree-pane { width: 184px; margin-left: 6px; flex: none; display: flex; flex-direction: column; padding-top: 5px; }
.searchrow { height: 24px; display: flex; background: #f8f8f8; flex: none; }
.search { width: 158px; height: 24px; padding: 3px 0 0 3px; border: 1px solid #9aa6b0; background: #fff; color: #888; font-size: 12px; }
.s-ic { width: 16px; height: 16px; margin: 4px 0 0 4px; }
.tree { flex: 1; background: #fff; border: 1px solid #9aa6b0; border-right-width: 2px; border-right-color: #8b97a2; border-left-color: #c8ced2; padding: 1px 0 0 8px; }
.t-root { height: 17px; display: flex; align-items: center; font-size: 12px; }
.minus { width: 9px; height: 9px; border: 1px solid #8a97a6; background: linear-gradient(#8a97a6, #8a97a6) center / 5px 1px no-repeat #f2f2ee; }
.fun { width: 14px; height: 16px; margin: 0 5px 0 7px; }
.t-list { list-style: none; margin: 0 0 0 23px; padding: 0; position: relative; height: 153px; width: 0; border-left: 1px dotted #999; white-space: nowrap; }
.t-list li { height: 16px; display: flex; align-items: center; font: 10px "Liberation Mono", monospace; }
.t-list li::before { content: ""; width: 11px; border-top: 1px dotted #999; flex: none; }
.gear { width: 12px; height: 12px; flex: none; }
.t-list span { margin-left: 8px; }
.t-list b { font: 12px "Noto Sans CJK SC", sans-serif; }
.t-list .sel { background: #3168c0; margin-left: 6px; padding: 0 4px 0 2px; width: 31px; height: 17px; line-height: 17px; color: #14245c; }
.props { width: 667px; margin-left: 4px; flex: none; display: flex; flex-direction: column; min-height: 0; }
.p-tabs { height: 20px; flex: none; position: relative; }
.p-tab { display: block; width: 63px; height: 21px; margin-left: 1px; position: relative; z-index: 1; background: #fff; border: 1px solid #a6b0b8; border-top: 2px solid #f0a030; border-bottom: 0; border-radius: 3px 3px 0 0; text-align: center; line-height: 14px; }
.p-body { flex: 1; min-height: 0; background: #fff; border: 1px solid #94a1ab; border-width: 1px 2px 0 1px; padding: 3px 2px 0 3px; }
.grid { height: 100%; border: 1px solid #b4bcc4; border-bottom: 0; }
.g-head { height: 24px; display: flex; }
.gh { display: block; text-align: center; line-height: 21px; background: linear-gradient(#f8f7f2, #e8e5d8); border-right: 1px solid #d6d3c4; }
.gh-n { width: 22px; }
.gh-a { width: 190px; }
.gh-b { width: 127px; color: #6a1a1a; background: linear-gradient(#f8dc9c, #f0c062); }
.gh-c { width: 31px; }
.g-row { height: 19px; display: flex; align-items: center; }
.rn { width: 22px; height: 19px; line-height: 18px; text-align: center; font: 12px/18px "Liberation Mono", monospace; background: linear-gradient(#f7f6f1, #e8e5d8); border-bottom: 1px solid #d2cfc0; }
.cur { background: linear-gradient(#2f6fd0, #2f6fd0) 22px 0 / 60px 100% no-repeat; }
.cur .rn { background: linear-gradient(#fbdc9f, #f6cc80); color: #8a1a1a; }
.plus { width: 11px; height: 11px; margin-left: 3px; background: #ece9d8; border: 1px solid #bbb8a8; font: 11px/9px "Liberation Mono", monospace; text-align: center; }

/* ---------- section dialog ---------- */
.dialog { position: absolute; left: 250px; top: 154px; width: 600px; height: 590px; display: flex; flex-direction: column; background: #0f52dc; padding: 0 4px; }
.d-title { height: 22px; flex: none; font: bold 13px/24px "Noto Sans CJK SC", sans-serif; color: #fff; }
.d-body { flex: 1; min-height: 0; background: #ece9d8; padding: 1px 2px 0 2px; display: flex; flex-direction: column; }
.d-tabs { height: 19px; flex: none; display: flex; align-items: flex-end; border-bottom: 1px solid #fff; }
.d-tab { width: 47px; height: 17px; background: #ece9d8; border: 1px solid #a6a393; border-bottom: 0; padding-left: 4px; line-height: 17px; }
.d-tab.on { width: 50px; height: 19px; background: #fbfaf5; border-top: 2px solid #f0a030; padding-left: 5px; line-height: 14px; border-radius: 3px 3px 0 0; }
.d-bar { height: 26px; flex: none; background: linear-gradient(#f3f1e8, #e8e5d8); display: flex; align-items: center; gap: 10px; white-space: nowrap; }
.d-bar .sep { margin: 0 -2.500px; }
.d-bar2 { height: 25px; gap: 3px; align-items: flex-start; padding-top: 2px; line-height: 19px; }
.grip { width: 3px; height: 14px; margin: 0 -1px 0 3px; background: radial-gradient(circle, #a8a596 1px, transparent 1.200px) 0 0 / 3px 4px; }
.d-bar2 .grip { margin: 3px 2px 0 3px; }
.dis { color: #a5a397; }
.d-bar2 .dis { margin-left: 4px; }
.d-sel { width: 134px; height: 19px; border: 1px solid #b4b1a1; color: #a5a397; font: 10px/17px "Liberation Mono", monospace; padding: 0 5px 0 2px; display: flex; align-items: center; background: #ece9d8; }
.canvas { display: block; flex: none; box-sizing: content-box; width: 581px; height: 488px; margin: 0 0 0 3px; background: #000; border: solid #8a1c1c; border-width: 2px 0 0 2px; box-shadow: 2px 0 0 #c04040; overflow: hidden; }
.grid-l { fill: none; stroke: #4a4a4a; stroke-width: 1; stroke-dasharray: 5 3; }
.outline { fill: none; stroke: #fff; stroke-width: 3; }
.leader { fill: none; stroke: #fff; stroke-width: 1; stroke-dasharray: 3 1; }
.gr { fill: none; stroke: #22e02a; stroke-width: 2; }
.rebar { fill: none; stroke: #f00; stroke-width: 6; stroke-linejoin: round; }
.bar-y circle { fill: #000; stroke: #f4ee30; stroke-width: 1; }
.bar-m circle { fill: #000; stroke: #b020b0; stroke-width: 1; }
.bar-ty, .bar-tm { font: bold 6px "Liberation Sans", sans-serif; text-anchor: middle; }
.bar-ty { fill: #f4ee30; }
.bar-tm { fill: #c030c0; }
.dim { font: 27px "Liberation Serif", serif; fill: #fff; }
.lbl { font: 26px "Noto Sans CJK SC", sans-serif; fill: #fff; }
.zero { font: 11px "Liberation Sans", sans-serif; fill: #555; }

/* ---------- annotation arrows ---------- */
.overlay { position: absolute; left: 0; top: 0; width: 1332px; height: 737px; pointer-events: none; }
.arrow { fill: none; stroke: #e81212; stroke-width: 3.500; }
```
